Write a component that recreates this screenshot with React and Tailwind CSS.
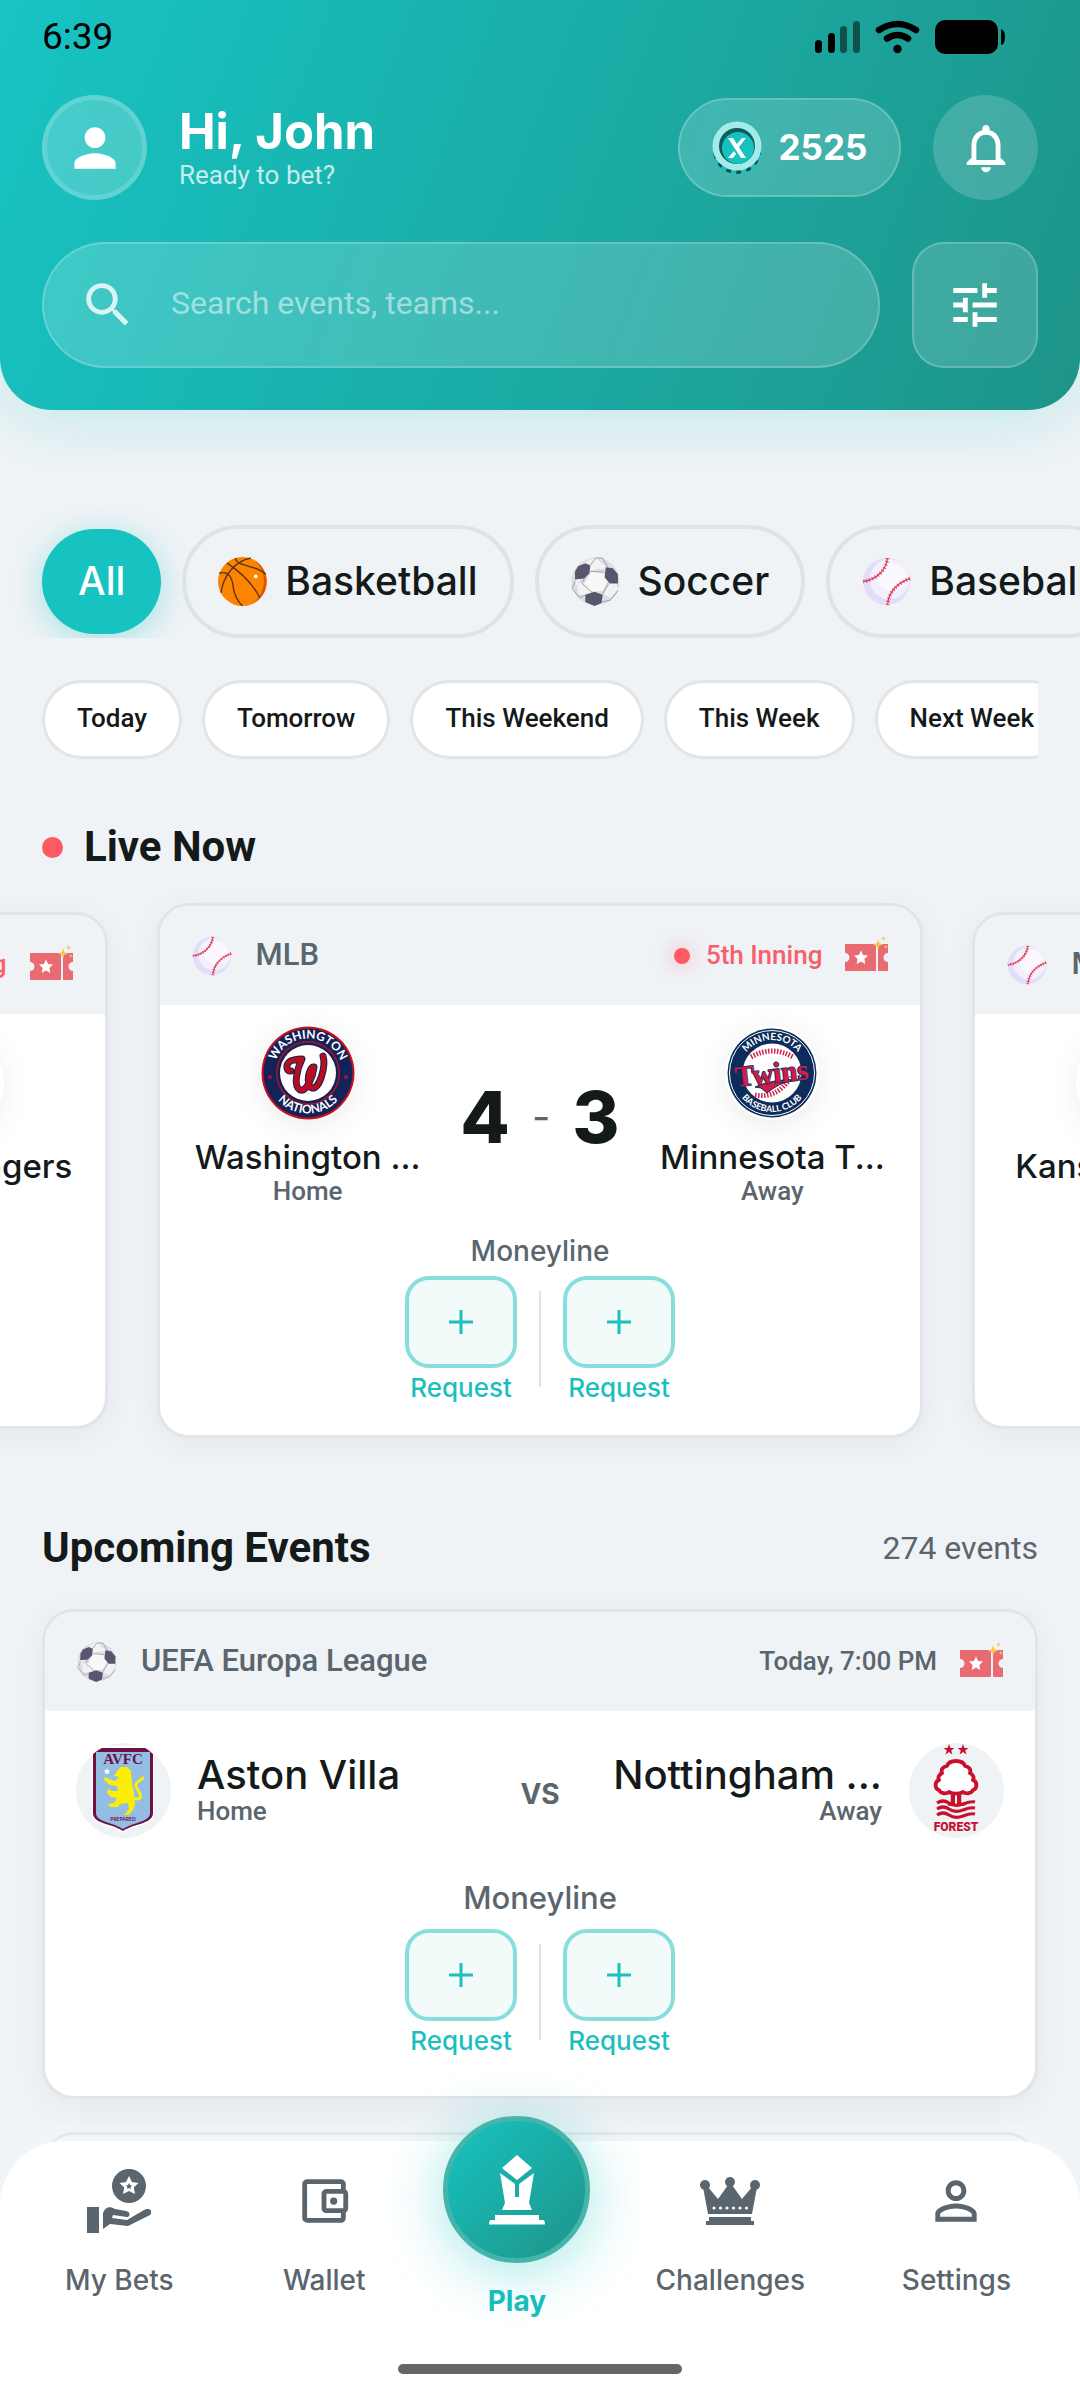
import React, { useState } from 'react';
import {
    MdPerson,
    MdSearch,
    MdTune,
    MdNotificationsNone,
    MdPersonOutline,
    MdOutlineAccountBalanceWallet,
} from 'react-icons/md';

function Basketball({ className }) {
    return (
        <svg viewBox="0 0 48 48" className={className} aria-hidden="true">
            <circle cx="24" cy="24" r="24" fill="#fb8500" />
            <path d="M36 3.5A24 24 0 0 1 22 48 24 24 0 0 0 36 3.5z" fill="#f06f04" />
            <path d="M36 3.5A24 24 0 0 1 33 46 27 27 0 0 0 36 3.5z" fill="#dd5606" />
            <g fill="none" stroke="#5b3013" strokeWidth="1.3">
                <path d="M9 6C21 14 34 26 41 40" />
                <path d="M3 35C5 18 17 4 32 1" />
                <path d="M1 16C11 13 14 21 15 30 16 37 19 43 24 48" />
                <path d="M17 1C18 10 37 7 47 17" />
            </g>
            <circle cx="37" cy="19" r="1.8" fill="#fff" />
        </svg>
    );
}

function SoccerBall({ className }) {
    return (
        <svg viewBox="0 0 48 48" className={className} aria-hidden="true">
            <circle cx="24" cy="24" r="23.4" fill="#dcdde1" />
            <path d="M24 1C12 3 3 14 5 28c8-14 20-18 32-16z" fill="#f1f2f3" />
            <path d="M20 14l11 1 5 8-5 10-10 1-8-8z" fill="#f8f8f9" />
            <path d="M6 26l7-1 8 9-5 4-9-2zM37 26l7-1 2 6-7 9-7-3z" fill="#f1f2f3" />
            <g fill="#57566e">
                <path d="M7 9l7-3 5 2-1 8-5 5-9 1 0-8z" />
                <path d="M34 10l7 1 5 6 0 9-8 0-5-6z" />
                <path d="M14 37l9-3 8 3-1 8-7 3-9-4z" />
            </g>
            <g fill="none" stroke="#9a9aa5" strokeWidth="0.9">
                <path d="M18 14l14 1M13 21l-2 5 10 9M37 26l-6 10M19 8l5-7h7l5 9M4 24l-3 7 8 9 5-3M31 44l8-2 7-9" />
            </g>
        </svg>
    );
}

function Baseball({ className }) {
    return (
        <svg viewBox="0 0 48 48" className={className} aria-hidden="true">
            <circle cx="24" cy="24" r="23" fill="#e4ddfa" />
            <circle cx="27" cy="22" r="19.5" fill="#f4effd" />
            <circle cx="29" cy="20" r="14" fill="#fbf9ff" />
            <g fill="none" stroke="#dc4058">
                <path d="M25 1C24 12 15 22 1 24M47 21C34 26 26 35 25 47" strokeWidth="1.3" />
                <path d="M25 1C24 12 15 22 1 24M47 21C34 26 26 35 25 47" strokeWidth="3.6" strokeDasharray="1 2.2" />
            </g>
        </svg>
    );
}

const balls = { basketball: Basketball, soccer: SoccerBall, baseball: Baseball };

function Ticket() {
    return (
        <svg viewBox="0 0 43 36" className="h-[36px] w-[43px] shrink-0" aria-hidden="true">
            <path d="M0 8h31v27H0v-9a4 4 0 0 0 0-9zM33 8h10v9a4 4 0 0 0 0 9v9H33z" fill="#e96b72" />
            <path d="M32 9v26" stroke="#eff3f6" strokeWidth="2" strokeDasharray="4 2" />
            <path d="M16 14.500l2.100 4.500 4.900.6-3.600 3.400.9 4.900-4.300-2.400-4.300 2.400.9-4.900L9 19.600l4.900-.6z" fill="#fff" />
            <path d="M33 3l1.200 4 3.800 1.500-3.800 1.500-1.200 4-1.200-4L28 8.500 31.800 7zM38.500 0l.7 1.900 1.900.7-1.900.7-.7 1.900-.7-1.900-1.900-.7 1.900-.7zM40.800 8.500l.6 1.700 1.600.7-1.600.6-.6 1.700-.6-1.700-1.600-.6 1.600-.7z" fill="#f7c64f" />
        </svg>
    );
}

function CoinIcon() {
    return (
        <svg viewBox="0 0 50 54" className="h-[54px] w-[50px]" aria-hidden="true">
            <circle cx="25" cy="29" r="24" fill="#18bdbc" />
            <circle cx="25" cy="29" r="22" fill="none" stroke="#0c4c50" strokeWidth="4" strokeDasharray="4.600 5.500" />
            <circle cx="25" cy="25" r="24.500" fill="#a3ebe9" />
            <circle cx="25" cy="25" r="18" fill="#0d5d60" />
            <circle cx="26" cy="27" r="16" fill="#17c1c0" />
            <path d="M16 17h5l13 20h-5zM30 17h4l-7 9-2-3zM16 37l6-7 2 3-3 4z" fill="#fff" />
        </svg>
    );
}

function StatusIcons() {
    return (
        <svg viewBox="0 0 192 36" className="h-[36px] w-[192px]" aria-hidden="true">
            <rect x="1" y="21" width="7" height="13" rx="3.500" />
            <rect x="14" y="14" width="7" height="20" rx="3.500" />
            <rect x="26" y="7" width="7" height="27" rx="3.500" opacity=".5" />
            <rect x="39" y="2" width="7" height="32" rx="3.500" opacity=".5" />
            <g fill="none" stroke="#000" strokeWidth="6.500" strokeLinecap="round">
                <path d="M65 11q18.500-12 37 0" />
                <path d="M73 19.500q10.500-7 21 0" />
            </g>
            <circle cx="83.500" cy="30" r="4.200" />
            <rect x="121" y="1" width="63" height="34" rx="10" />
            <path d="M187 10q4 1 4 8t-4 8z" />
        </svg>
    );
}

function NationalsLogo() {
    return (
        <svg viewBox="0 0 94 94" className="size-[94px]" role="img" aria-label="Nationals logo">
            <defs>
                <path id="nat-top" d="M12.500 47a34.500 34.500 0 0 1 69 0" />
                <path id="nat-bottom" d="M6.500 47a40.500 40.500 0 0 0 81 0" />
            </defs>
            <circle cx="47" cy="47" r="46.500" fill="#c3111f" />
            <circle cx="47" cy="47" r="44.500" fill="#14225a" />
            <circle cx="47" cy="47" r="32" fill="#ab1524" />
            <circle cx="47" cy="47" r="30.500" fill="#14225a" />
            <circle cx="47" cy="47" r="28" fill="#fff" />
            <g fill="#fff" fontFamily="Lato, sans-serif" fontWeight="700" fontSize="12" textAnchor="middle">
                <text><textPath href="#nat-top" startOffset="50%">WASHINGTON</textPath></text>
                <text><textPath href="#nat-bottom" startOffset="50%">NATIONALS</textPath></text>
            </g>
            <circle cx="9" cy="51" r="2" fill="#ab1524" />
            <circle cx="85" cy="51" r="2" fill="#ab1524" />
            <g fill="none" strokeLinecap="round" strokeLinejoin="round">
                <path d="M30 45c-6 1-6-10 3-11 4-1 7-1 8-1-5 10-9 27-2 31 7 2 13-14 14-23-5-1-9 19-2 21 8 1 14-22 11-32" stroke="#14225a" strokeWidth="7" />
                <path d="M30 45c-6 1-6-10 3-11 4-1 7-1 8-1-5 10-9 27-2 31 7 2 13-14 14-23-5-1-9 19-2 21 8 1 14-22 11-32" stroke="#b80d1d" strokeWidth="5" />
            </g>
        </svg>
    );
}

function TwinsLogo() {
    return (
        <svg viewBox="0 0 94 94" className="size-[94px]" role="img" aria-label="Twins logo">
            <defs>
                <path id="twins-top" d="M14 47a33 33 0 0 1 66 0" />
                <path id="twins-bottom" d="M8 47a39 39 0 0 0 78 0" />
            </defs>
            <circle cx="47" cy="47" r="44.500" fill="#0c2c5b" />
            <circle cx="47" cy="47" r="42.500" fill="none" stroke="#fff" strokeWidth="1" />
            <circle cx="47" cy="47" r="29.500" fill="#fff" />
            <path d="M26 31q21-12 42 0M30 69q22 4 36-18" fill="none" stroke="#d3204a" strokeWidth="5" strokeDasharray="1.500 1.500" />
            <g fill="#fff" fontFamily="Lato, sans-serif" fontWeight="700" fontSize="10" textAnchor="middle">
                <text><textPath href="#twins-top" startOffset="50%">MINNESOTA</textPath></text>
                <text fontSize="9"><textPath href="#twins-bottom" startOffset="50%">BASEBALL CLUB</textPath></text>
            </g>
            <path d="M30 61q18-8 38-7-14 3-26 13l-6-5z" fill="#cf1c48" stroke="#0c2c5b" strokeWidth="1" />
            <text x="47" y="57" transform="rotate(-6 47 50)" textAnchor="middle" fontFamily="Liberation Serif, serif" fontWeight="700" fontSize="29" fill="#cf1c48" stroke="#0c2c5b" strokeWidth="1.500" paintOrder="stroke">Twins</text>
        </svg>
    );
}

function VillaLogo() {
    return (
        <svg viewBox="0 0 94 94" className="size-[94px]" role="img" aria-label="Aston Villa crest">
            <path d="M24 3h46l8 8v60c0 11-18 11-31 19-13-8-31-8-31-19V11z" fill="#fff" />
            <path d="M24 5h46l7 6v59c0 11-18 10-30 18-12-8-30-7-30-18V11z" fill="#6f1043" />
            <path d="M20 9h54v61c0 9-16 9-27 16-11-7-27-7-27-16z" fill="#94bde3" />
            <text x="47" y="21" textAnchor="middle" fontFamily="Liberation Serif, serif" fontWeight="700" fontSize="15" fill="#6f1043">AVFC</text>
            <path d="M31 25l1 2.200 2.400.2-1.800 1.700.6 2.400-2.200-1.300-2.200 1.300.6-2.400-1.800-1.700 2.400-.2z" fill="#fff" />
            <path d="M41 28l4-4 6 0 4 4 1 12 2 10 1 12-2 5-4 5h-5l5-6-1-6-8 1-2 3h-8l-2-3 6-1 3-5-6-1-4-4 1-4 4 2 6 0-1-5-7-1-6-5 1-3 4 2 6 2 4-4-5-1z" fill="#fdee06" />
            <path d="M57 55c9 3 9-2 5-8-5-7 0-8 5-12" fill="none" stroke="#fdee06" strokeWidth="3" strokeLinecap="round" />
            <text x="47" y="78" textAnchor="middle" fontFamily="Lato, sans-serif" fontWeight="700" fontSize="5" fill="#6f1043">PREPARED</text>
        </svg>
    );
}

function ForestLogo() {
    return (
        <svg viewBox="0 0 94 94" className="size-[94px]" role="img" aria-label="Nottingham Forest crest">
            <g fill="#c8102e">
                <path d="M40 1l1.400 4h4l-3.200 2.500 1.300 4L40 9l-3.500 2.500 1.300-4L34.600 5h4zM54 1l1.400 4h4l-3.200 2.500 1.300 4L54 9l-3.500 2.500 1.300-4L48.600 5h4z" />
                <path d="M43 47h3v15q-5 2-8 0 5-2 5-8zM48 47h3v8q0 6 6 7-4 2-9 0z" />
            </g>
            <path d="M47 18c-5 0-8 2-9 5-5 1-6 4-5 7-4 2-4 5-3 7-5 2-4 9 0 10 2 4 7 4 10 2 4 2 10 2 14 0 3 2 8 2 10-2 4-1 5-8 0-10 1-2 1-5-3-7 1-3 0-6-5-7-1-3-4-5-9-5z" fill="#fff" stroke="#c8102e" strokeWidth="3.800" strokeLinejoin="round" />
            <path d="M28 60q6-4 12 0t14 1 12-2M28 66q6-4 12 0t14 1 12-2M28 72q6-4 12 0t14 1 12-2" fill="none" stroke="#c8102e" strokeWidth="3.200" />
            <path d="M43 50v9M51 50v9" stroke="#c8102e" strokeWidth="2.500" />
            <text x="47" y="88" textAnchor="middle" fontFamily="Roboto, sans-serif" fontWeight="900" fontSize="12" fill="#c8102e">FOREST</text>
        </svg>
    );
}

function BetsIcon() {
    return (
        <svg viewBox="0 0 64 64" className="size-[64px]" fill="currentColor" aria-hidden="true">
            <path fillRule="evenodd" d="M42 0a17 17 0 1 1 0 34 17 17 0 0 1 0-34zm0 7l-3 6-6.500 1 4.700 4.600L36 25l6-3 6 3-1.200-6.400 4.700-4.600-6.500-1zm0 7l1 2 2 .5-1.500 1.500.5 2-2-1-2 1 .5-2-1.500-1.500 2-.5z" />
            <path d="M0 38h12v26H0z" />
            <path d="M16 44c2-6 7-7 12-4l11 2c5 1 4 6 1 6l-14-2-1 3 15 2 17-10c5-3 10 1 6 5L41 57l-18-2-7 5z" />
        </svg>
    );
}

function CrownIcon() {
    return (
        <svg viewBox="0 0 60 48" className="h-[48px] w-[60px]" fill="currentColor" aria-hidden="true">
            <circle cx="5" cy="8" r="5" />
            <circle cx="30" cy="5" r="5" />
            <circle cx="55" cy="8" r="5" />
            <path d="M3 10h5l10 12L28 8h4l10 14L52 10h5l-5 27H8z" />
            <path d="M9 40h42v4H9zM6 44h48v4H6z" />
            <g fill="#fff">
                <circle cx="14" cy="31" r="1.600" />
                <circle cx="20.500" cy="31" r="1.600" />
                <circle cx="27" cy="31" r="1.600" />
                <circle cx="33.500" cy="31" r="1.600" />
                <circle cx="40" cy="31" r="1.600" />
                <circle cx="46.500" cy="31" r="1.600" />
            </g>
        </svg>
    );
}

function TrophyIcon() {
    return (
        <svg viewBox="0 0 56 70" className="h-[70px] w-[56px]" fill="#fff" aria-hidden="true">
            <path d="M28 0l15 13-15 12-15-12z" />
            <path d="M11 18l15 11v13h4V29l15-11-5 30 3 7H13l3-7z" />
            <path d="M6 60h44v5h4q2 0 2 4.500H0Q0 65 2 65h4z" />
        </svg>
    );
}

function LeagueBar({ sport, league, children }) {
    const Ball = balls[sport];
    return (
        <div className="flex h-[99px] items-center justify-between bg-[#eff3f6] px-[32px] font-[Roboto,sans-serif] font-medium text-[#5a656e]">
            <div className="flex items-center gap-[24px] text-[31px]">
                <Ball className="size-[40px]" />
                <span>{league}</span>
            </div>
            <div className="flex items-center text-[26px]">
                {children}
                <span className="ml-[23px] pb-[4px]"><Ticket /></span>
            </div>
        </div>
    );
}

function RequestButton() {
    return (
        <button type="button" className="flex w-[112px] flex-col items-center gap-[4px] text-[26px] leading-[32px] font-medium text-[#1cbfbd]">
            <span className="flex h-[92px] w-full items-center justify-center rounded-[24px] border-4 border-[#87dedb] bg-[#f2fbfa]">
                <svg viewBox="0 0 26 26" className="size-[26px]" aria-hidden="true">
                    <path d="M13 1v24M1 13h24" stroke="currentColor" strokeWidth="3" />
                </svg>
            </span>
            Request
        </button>
    );
}

function Moneyline() {
    return (
        <div className="flex justify-center gap-[22px]">
            <RequestButton />
            <div className="mt-[15px] h-[96px] w-[2px] bg-[#dfe3e6]" />
            <RequestButton />
        </div>
    );
}

function LiveTeam({ name, side, children }) {
    return (
        <div className="flex w-[232px] flex-col items-center">
            <div className="flex size-[94px] items-center justify-center rounded-full shadow-[0_6px_32px_rgba(0,0,0,0.08)]">
                {children}
            </div>
            <div className="mt-[19px] text-[33px] leading-[36px] font-medium whitespace-nowrap text-[#14191a]">{name}</div>
            <div className="font-[Roboto,sans-serif] text-[26px] leading-[32px] font-medium text-[#5a656e]">{side}</div>
        </div>
    );
}

function LiveCard({ active, period, home, away, score, homeLogo, awayLogo }) {
    return (
        <article className={`shrink-0 overflow-hidden rounded-[32px] border-3 border-[#e1e5e8] bg-white shadow-[0_6px_32px_rgba(20,40,60,0.05)] ${active ? 'w-[71%]' : 'w-[68%]'}`}>
            <LeagueBar sport="baseball" league="MLB">
                <span className="mr-[16px] size-[16px] rounded-full bg-[#ff5a64] shadow-[0_0_20px_rgba(255,90,100,0.5)]" />
                <span className="text-[#f5606a]">{period}</span>
            </LeagueBar>
            <div className={`px-[32px] pt-[21px] ${active ? 'pb-[31px]' : 'pb-[13px]'}`}>
                <div className="flex items-center justify-between">
                    <LiveTeam name={home} side="Home">{homeLogo}</LiveTeam>
                    <div className="flex items-center gap-[22px] text-[72px] font-extrabold text-[#14191a]">
                        <span>{score[0]}</span>
                        <span className="text-[40px] font-normal text-[#5a656e]">-</span>
                        <span>{score[1]}</span>
                    </div>
                    <LiveTeam name={away} side="Away">{awayLogo}</LiveTeam>
                </div>
                <div className="mt-[28px] mb-[9px] text-center text-[28px] leading-[32px] font-medium text-[#5a656e]">Moneyline</div>
                <Moneyline />
            </div>
        </article>
    );
}

function NavItem({ label, children }) {
    return (
        <a href="#" className="flex min-w-[154px] flex-col items-center px-[23px] pt-[28px]">
            <span className="flex h-[64px] items-center">{children}</span>
            <span className="mt-[31px]">{label}</span>
        </a>
    );
}

export default function App() {
    const [sport, setSport] = useState('All');
    const [query, setQuery] = useState('');

    const sports = [
        { name: 'Basketball', ball: 'basketball' },
        { name: 'Soccer', ball: 'soccer' },
        { name: 'Baseball', ball: 'baseball' },
    ];
    const dates = ['Today', 'Tomorrow', 'This Weekend', 'This Week', 'Next Week'];

    return (
        <div className="relative h-screen overflow-hidden bg-[#eff3f6] font-[Inter,sans-serif] text-[#14191a]">
            <header className="rounded-b-[52px] bg-[linear-gradient(111deg,#17c4c4,#1ba8a1_60%,#1e9488)] px-[42px] pb-[42px] shadow-[0_12px_60px_rgba(23,195,195,0.2)]">
                <div className="flex h-[74px] items-center justify-between font-[Roboto,sans-serif] text-[37px] text-black">
                    <span>6:39</span>
                    <span className="mr-[32px]"><StatusIcons /></span>
                </div>

                <div className="mt-[21px] flex items-center text-white">
                    <div className="flex size-[105px] items-center justify-center rounded-full border-5 border-white/15 bg-white/20">
                        <MdPerson className="size-[62px]" />
                    </div>
                    <div className="ml-[32px] flex-1">
                        <h1 className="text-[49px] leading-[54px] font-bold">Hi, John</h1>
                        <p className="font-[Roboto,sans-serif] text-[26px] leading-[32px] text-white/75">Ready to bet?</p>
                    </div>
                    <button type="button" className="flex h-[99px] w-[223px] items-center justify-center gap-[17px] rounded-full border-2 border-white/20 bg-white/17 text-[35px] font-bold">
                        <CoinIcon />
                        2525
                    </button>
                    <button type="button" aria-label="Notifications" className="ml-[32px] flex size-[105px] items-center justify-center rounded-full bg-white/17">
                        <MdNotificationsNone className="size-[58px]" />
                    </button>
                </div>

                <div className="mt-[42px] flex gap-[32px]">
                    <label className="flex h-[126px] flex-1 items-center rounded-full border-2 border-white/20 bg-white/17 pl-[35px]">
                        <MdSearch className="size-[58px] text-white/80" />
                        <input
                            type="text"
                            aria-label="Search"
                            value={query}
                            onChange={(e) => setQuery(e.target.value)}
                            placeholder="Search events, teams..."
                            className="ml-[34px] h-full flex-1 pb-[4px] font-[Roboto,sans-serif] text-[32px] text-white outline-none placeholder:text-white/50"
                        />
                    </label>
                    <button type="button" aria-label="Filters" className="flex size-[126px] items-center justify-center rounded-[32px] border-2 border-white/20 bg-white/15 text-white">
                        <MdTune className="size-[58px]" />
                    </button>
                </div>
            </header>

            <div className="mt-[75px] flex items-center gap-[21px] overflow-hidden pt-[40px] pl-[42px] text-[39px] font-medium">
                <button
                    type="button"
                    onClick={() => setSport('All')}
                    className="h-[105px] shrink-0 rounded-full bg-[#17c3c1] px-[36px] text-white shadow-[0_6px_32px_rgba(23,195,193,0.35)]"
                >
                    All
                </button>
                {sports.map(({ name, ball }) => {
                    const Ball = balls[ball];
                    return (
                        <button
                            key={name}
                            type="button"
                            aria-pressed={sport === name}
                            onClick={() => setSport(name)}
                            className="flex h-[113px] shrink-0 items-center gap-[18px] rounded-full border-4 border-[#dfe3e6] px-[32px]"
                        >
                            <Ball className="size-[49px]" />
                            {name}
                        </button>
                    );
                })}
            </div>

            <div className="mx-[42px] mt-[42px] flex gap-[20px] overflow-hidden">
                {dates.map((d) => (
                    <button key={d} type="button" className="h-[79px] shrink-0 rounded-full border-3 border-[#e1e5e8] bg-white px-[32px] pb-[2px] font-[Roboto,sans-serif] text-[26px] font-medium">
                        {d}
                    </button>
                ))}
            </div>

            <h2 className="mx-[42px] mt-[63px] flex items-center gap-[21px] font-[Roboto,sans-serif] text-[42px] leading-[50px] font-bold">
                <span className="size-[21px] rounded-full bg-[#ff5a64]" />
                Live Now
            </h2>

            <div className="flex items-center justify-center gap-[49px] overflow-hidden py-[31px]">
                <LiveCard period="7th Inning" home="Houston A..." away="Texas Rangers" score={[2, 5]} />
                <LiveCard
                    active
                    period="5th Inning"
                    home="Washington ..."
                    away="Minnesota T..."
                    score={[4, 3]}
                    homeLogo={<NationalsLogo />}
                    awayLogo={<TwinsLogo />}
                />
                <LiveCard period="3rd Inning" home="Kansas City..." away="Chicago W..." score={[1, 0]} />
            </div>

            <div className="mx-[42px] mt-[54px] flex items-center justify-between font-[Roboto,sans-serif]">
                <h2 className="text-[42px] leading-[50px] font-bold">Upcoming Events</h2>
                <span className="text-[32px] text-[#5a656e]">274 events</span>
            </div>

            <article className="mx-[42px] mt-[36px] overflow-hidden rounded-[32px] border-3 border-[#e1e5e8] bg-white shadow-[0_6px_32px_rgba(20,40,60,0.05)]">
                <LeagueBar sport="soccer" league="UEFA Europa League">
                    <span>Today, 7:00 PM</span>
                </LeagueBar>
                <div className="px-[31px] pt-[32px] pb-[39px]">
                    <div className="grid grid-cols-[1fr_auto_1fr] items-center">
                        <div className="flex items-center gap-[26px]">
                            <div className="size-[95px] shrink-0 overflow-hidden rounded-full bg-[#eff3f6]"><VillaLogo /></div>
                            <div>
                                <div className="text-[40px] leading-[40px] font-medium whitespace-nowrap">Aston Villa</div>
                                <div className="font-[Roboto,sans-serif] text-[26px] leading-[32px] font-medium text-[#5a656e]">Home</div>
                            </div>
                        </div>
                        <span className="pt-[6px] text-[28px] font-bold text-[#5a656e]">VS</span>
                        <div className="flex items-center justify-end gap-[27px] text-right">
                            <div>
                                <div className="text-[40px] leading-[40px] font-medium whitespace-nowrap">Nottingham ...</div>
                                <div className="font-[Roboto,sans-serif] text-[26px] leading-[32px] font-medium text-[#5a656e]">Away</div>
                            </div>
                            <div className="size-[95px] shrink-0 overflow-hidden rounded-full bg-[#eff3f6]"><ForestLogo /></div>
                        </div>
                    </div>
                    <div className="mt-[42px] mb-[13px] text-center text-[31px] leading-[36px] font-medium text-[#5a656e]">Moneyline</div>
                    <Moneyline />
                </div>
            </article>

            <div className="mx-[42px] mt-[33px] h-[490px] rounded-[32px] border-3 border-[#dfe3e6] bg-[#eff3f6]" />

            <nav className="absolute inset-x-0 bottom-0 rounded-t-[64px] bg-white pb-[26px] shadow-[0_-6px_24px_rgba(255,255,255,0.4)]">
                <div className="flex h-[223px] justify-between pr-[46px] pl-[42px] text-[28px] leading-[32px] font-medium text-[#5a656e]">
                    <NavItem label="My Bets"><BetsIcon /></NavItem>
                    <NavItem label="Wallet"><MdOutlineAccountBalanceWallet className="size-[58px]" /></NavItem>
                    <a href="#" className="-mt-[25px] flex w-[130px] flex-col items-center font-bold text-[#17bdbb]">
                        <span className="flex size-[147px] shrink-0 items-center justify-center rounded-full border-5 border-[#45b5ac] bg-[linear-gradient(135deg,#17c3c1,#1e9488)] shadow-[0_8px_60px_rgba(23,195,193,0.4)]">
                            <TrophyIcon />
                        </span>
                        <span className="mt-[22px]">Play</span>
                    </a>
                    <NavItem label="Challenges"><CrownIcon /></NavItem>
                    <NavItem label="Settings"><MdPersonOutline className="size-[62px]" /></NavItem>
                </div>
                <div className="mx-auto h-[10px] w-[284px] rounded-full bg-[#666666]" />
            </nav>
        </div>
    );
}
